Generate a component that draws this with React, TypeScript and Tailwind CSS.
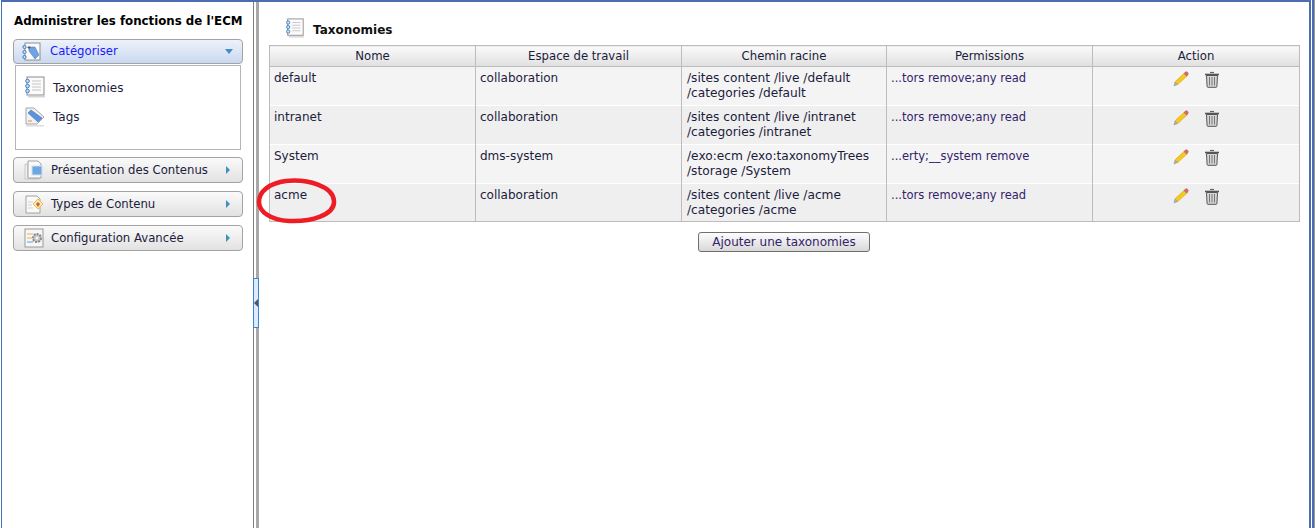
import React from "react";

const font = "font-['DejaVu_Sans',sans-serif]";

const rows = [
  { name: "default", workspace: "collaboration", path: ["/sites content /live /default", "/categories /default"], perms: "...tors remove;any read", bg: "bg-[#f4f4f4]" },
  { name: "intranet", workspace: "collaboration", path: ["/sites content /live /intranet", "/categories /intranet"], perms: "...tors remove;any read", bg: "bg-[#efefef]" },
  { name: "System", workspace: "dms-system", path: ["/exo:ecm /exo:taxonomyTrees", "/storage /System"], perms: "...erty;__system remove", bg: "bg-[#f4f4f4]" },
  { name: "acme", workspace: "collaboration", path: ["/sites content /live /acme", "/categories /acme"], perms: "...tors remove;any read", bg: "bg-[#efefef]" },
];

const columns = [
  { label: "Nome", width: "w-[206px]" },
  { label: "Espace de travail", width: "w-[206px]" },
  { label: "Chemin racine", width: "w-[205px]" },
  { label: "Permissions", width: "w-[206px]" },
  { label: "Action", width: "w-[207px]" },
];

function ListIcon({ size = 22 }: { size?: number }) {
  return (
    <svg width={size} height={size} viewBox="0 0 22 22" className="shrink-0">
      <rect x="3" y="1" width="17" height="18" fill="#fbfbfb" stroke="#8c8c8c" />
      <rect x="4" y="20" width="17" height="1.5" fill="#d5d5d5" />
      <path d="M8 5h9M8 8h9M8 11h9M8 14h9" stroke="#c4c4c4" />
      <circle cx="3.5" cy="5" r="1.8" fill="#cfe0f5" stroke="#3f7fc4" />
      <circle cx="3.5" cy="10" r="1.8" fill="#cfe0f5" stroke="#3f7fc4" />
      <circle cx="3.5" cy="15" r="1.8" fill="#cfe0f5" stroke="#3f7fc4" />
    </svg>
  );
}

function TagIcon() {
  return (
    <svg width="22" height="22" viewBox="0 0 22 22" className="shrink-0">
      <path d="M2 3h8l10 9-7 7H2z" fill="#f2f2f2" stroke="#a5a5a5" />
      <path d="M4 8l3-3 11 8-4 4z" fill="#5b93dc" stroke="#3f74bd" strokeWidth="0.6" />
      <path d="M4 16h4" stroke="#e0894a" />
      <rect x="2" y="20" width="18" height="1.5" fill="#dcdcdc" />
    </svg>
  );
}

function CategoryIcon() {
  return (
    <svg width="20" height="20" viewBox="0 0 20 20" className="shrink-0">
      <rect x="3" y="1" width="15" height="17" fill="#fbfbfb" stroke="#8e8e8e" />
      <path d="M7 5l6 0 4 8-4 4-6-8z" fill="#6fa3e2" stroke="#4b80c6" strokeWidth="0.6" />
      <path d="M7 4v3M5.5 5.5h3" stroke="#555" />
      <circle cx="2.5" cy="5" r="1.6" fill="#cfe0f5" stroke="#3f7fc4" />
      <circle cx="2.5" cy="10" r="1.6" fill="#cfe0f5" stroke="#3f7fc4" />
      <circle cx="2.5" cy="15" r="1.6" fill="#cfe0f5" stroke="#3f7fc4" />
    </svg>
  );
}

function PresentationIcon() {
  return (
    <svg width="20" height="20" viewBox="0 0 20 20" className="shrink-0">
      <path d="M1 4h3v14h11v1H1z" fill="#eee" stroke="#b3b3b3" strokeWidth="0.6" />
      <path d="M4 1h10l3 3v14H4z" fill="#f9f9f9" stroke="#a3a3a3" />
      <rect x="8" y="6" width="10" height="9" fill="#6ea6df" stroke="#cfe0f0" />
    </svg>
  );
}

function TypesIcon() {
  return (
    <svg width="20" height="20" viewBox="0 0 20 20" className="shrink-0">
      <path d="M2 2h11l3 3v14H2z" fill="#f9f9f9" stroke="#a3a3a3" />
      <path d="M4 8h5M4 11h4M4 14h5" stroke="#d0d0d0" />
      <path d="M14 5l5 5-5 5-5-5z" fill="#fbe9a6" stroke="#e8c04c" />
      <path d="M14 8l2 2-2 3-2-3z" fill="#d2554a" />
    </svg>
  );
}

function ConfigIcon() {
  return (
    <svg width="20" height="20" viewBox="0 0 20 20" className="shrink-0">
      <rect x="1" y="1" width="18" height="18" fill="#f6f6f6" stroke="#9a9a9a" />
      <path d="M3 6h6" stroke="#e8b54a" />
      <path d="M3 10h5" stroke="#e8b54a" />
      <path d="M3 14h6" stroke="#5a9fe0" />
      <circle cx="13" cy="10" r="4" fill="#c6c6c6" stroke="#8a8a8a" strokeWidth="2" strokeDasharray="2 1" />
      <circle cx="13" cy="10" r="1.5" fill="#f4f4f4" />
    </svg>
  );
}

function PencilIcon() {
  return (
    <svg width="16" height="16" viewBox="0 0 16 16" className="shrink-0">
      <path d="M1 15l1-4 2.5 2.5z" fill="#b0b0b0" stroke="#8a8a8a" strokeWidth="0.5" />
      <path d="M2.2 10.6L11 2.5l3 2.6-9.3 8.5z" fill="#f7c81e" stroke="#c49a10" strokeWidth="0.5" />
      <path d="M11 2.5l1.5-1.5c.6-.5 1.2-.4 1.8.1l.6.6c.5.6.5 1.2 0 1.7L14 5.1z" fill="#d96a6a" stroke="#a94a4a" strokeWidth="0.5" />
    </svg>
  );
}

function TrashIcon() {
  return (
    <svg width="16" height="17" viewBox="0 0 16 17" className="shrink-0">
      <path d="M6 1.5h4" stroke="#666" strokeWidth="1.2" />
      <path d="M1 3.5h14" stroke="#555" strokeWidth="1.6" />
      <path d="M2.5 4.5h11l-.6 11c0 .5-.3.8-.8.8H3.9c-.5 0-.8-.3-.8-.8z" fill="#d6d6d6" stroke="#555" />
      <path d="M5.5 6v8.5M8 6v8.5M10.5 6v8.5" stroke="#777" />
    </svg>
  );
}

function SideButton({ icon, label }: { icon: React.ReactNode; label: string }) {
  return (
    <div className="flex h-[26px] items-center rounded-[4px] border border-[#a3a3a3] bg-gradient-to-b from-[#fafafa] to-[#e2e2e2] pl-[10px] pr-[12px]">
      {icon}
      <span className="ml-[7px] flex-1 pt-[2px] text-[11.7px] text-[#1c1c3c]">{label}</span>
      <span className="h-0 w-0 border-y-[4px] border-l-[4px] border-y-transparent border-l-[#3f8fbf]" />
    </div>
  );
}

export default function App() {
  return (
    <div className={`${font} relative flex h-[528px] w-[1315px] overflow-hidden bg-white pl-px`}>
      <div className="flex min-w-0 flex-1 border-l border-t-2 border-[#4a6db5]">
        {/* left menu */}
        <aside className="flex w-[251px] shrink-0 flex-col pl-[11px] pr-[10px] pt-[10px]">
          <h2 className="ml-px h-[27px] whitespace-nowrap text-[11.8px] leading-[18px] font-bold text-black">Administrer les fonctions de l'ECM</h2>
          <div className="flex h-[25px] items-center rounded-[4px] border border-[#a3a3a3] bg-gradient-to-b from-[#eef2fa] to-[#c9d9f0] pl-[8px] pr-[9px]">
            <CategoryIcon />
            <span className="ml-[8px] flex-1 pt-px text-[11.7px] text-[#1a1aff]">Catégoriser</span>
            <span className="h-0 w-0 border-x-[4.5px] border-t-[5px] border-x-transparent border-t-[#3f8fbf]" />
          </div>
          <div className="mx-[2px] mt-[1px] h-[85px] border border-[#b5b5b5] px-[8px] pt-[10px]">
            <div className="flex h-[29px] items-start gap-[7px] text-[12px] text-[#1c1c3c]">
              <ListIcon />
              <span className="pt-[3px]">Taxonomies</span>
            </div>
            <div className="flex h-[29px] items-start gap-[7px] text-[12px] text-[#1c1c3c]">
              <TagIcon />
              <span className="pt-[3px]">Tags</span>
            </div>
          </div>
          <div className="mt-[7px] flex flex-col gap-[8px]">
            <SideButton icon={<PresentationIcon />} label="Présentation des Contenus" />
            <SideButton icon={<TypesIcon />} label="Types de Contenu" />
            <SideButton icon={<ConfigIcon />} label="Configuration Avancée" />
          </div>
        </aside>

        {/* divider */}
        <div className="relative flex w-[6px] shrink-0 border-l border-[#7d7d7d] bg-white">
          <div className="ml-auto w-[3px] bg-[#a8a8a8]" />
          <div className="absolute -left-px top-[276px] flex h-[50px] w-[6px] items-center border border-[#3f80d8] bg-[#dceafa]">
            <span className="h-0 w-0 border-y-[4px] border-r-[4px] border-y-transparent border-r-[#555]" />
          </div>
        </div>

        {/* main */}
        <main className="flex min-w-0 flex-1 flex-col pl-[10px] pr-[10px] pt-[16px]">
          <div className="flex h-[27px] items-start pl-[16px]">
            <ListIcon size={20} />
            <span className="ml-[8px] pt-[3px] text-[12px] font-bold text-[#111]">Taxonomies</span>
          </div>
          <table className="w-[1030px] table-fixed border-collapse text-[12px] text-[#1c1c3c]">
            <thead>
              <tr className="h-[21px]">
                {columns.map((c) => (
                  <th key={c.label} className={`${c.width} border border-[#bcbcbc] bg-gradient-to-b from-[#fafafa] to-[#e0e0e0] p-0 pt-px text-center text-[11.7px] font-normal`}>
                    {c.label}
                  </th>
                ))}
              </tr>
            </thead>
            <tbody>
              {rows.map((r) => (
                <tr key={r.name} className={`h-[39px] last:h-[38px] ${r.bg} border-b border-white last:border-[#bcbcbc]`}>
                  <td className="border-x border-[#bcbcbc] px-[4px] pt-[2px] align-top">{r.name}</td>
                  <td className="border-x border-[#bcbcbc] px-[4px] pt-[2px] align-top">{r.workspace}</td>
                  <td className="border-x border-[#bcbcbc] px-[5px] pt-[4px] align-top text-[12.2px] leading-[15px]">
                    {r.path[0]}
                    <br />
                    {r.path[1]}
                  </td>
                  <td className="border-x border-[#bcbcbc] px-[4px] pt-[3px] align-top text-[11.5px] text-[#33226a]">{r.perms}</td>
                  <td className="border-x border-[#bcbcbc] pt-[4px] align-top">
                    <div className="flex justify-center gap-[15px]">
                      <PencilIcon />
                      <TrashIcon />
                    </div>
                  </td>
                </tr>
              ))}
            </tbody>
          </table>
          <div className="mt-[10px] flex w-[1030px] justify-center">
            <button className="h-[20px] w-[172px] rounded-[3px] border border-[#6f6f6f] bg-gradient-to-b from-[#fdfdfd] to-[#d8d8d8] text-[12px] leading-none text-[#33226a]">
              Ajouter une taxonomies
            </button>
          </div>
        </main>
      </div>

      {/* right frame edge */}
      <div className="flex w-[6px] shrink-0">
        <div className="w-[2px] bg-[#4a6db5]" />
        <div className="w-[1px] bg-white" />
        <div className="w-[2px] bg-[#4a6db5]" />
        <div className="w-[1px] bg-[#999]" />
      </div>

      {/* hand-drawn red circle */}
      <svg className="absolute left-[256px] top-[178px]" width="82" height="47" viewBox="0 0 82 47">
        <path d="M30 3C52 1 77 8 78 23C79 37 55 44 33 43C15 42 3 34 3 24C3 13 14 5 30 3Z" fill="none" stroke="#ee1c25" strokeWidth="4.5" />
      </svg>
    </div>
  );
}
